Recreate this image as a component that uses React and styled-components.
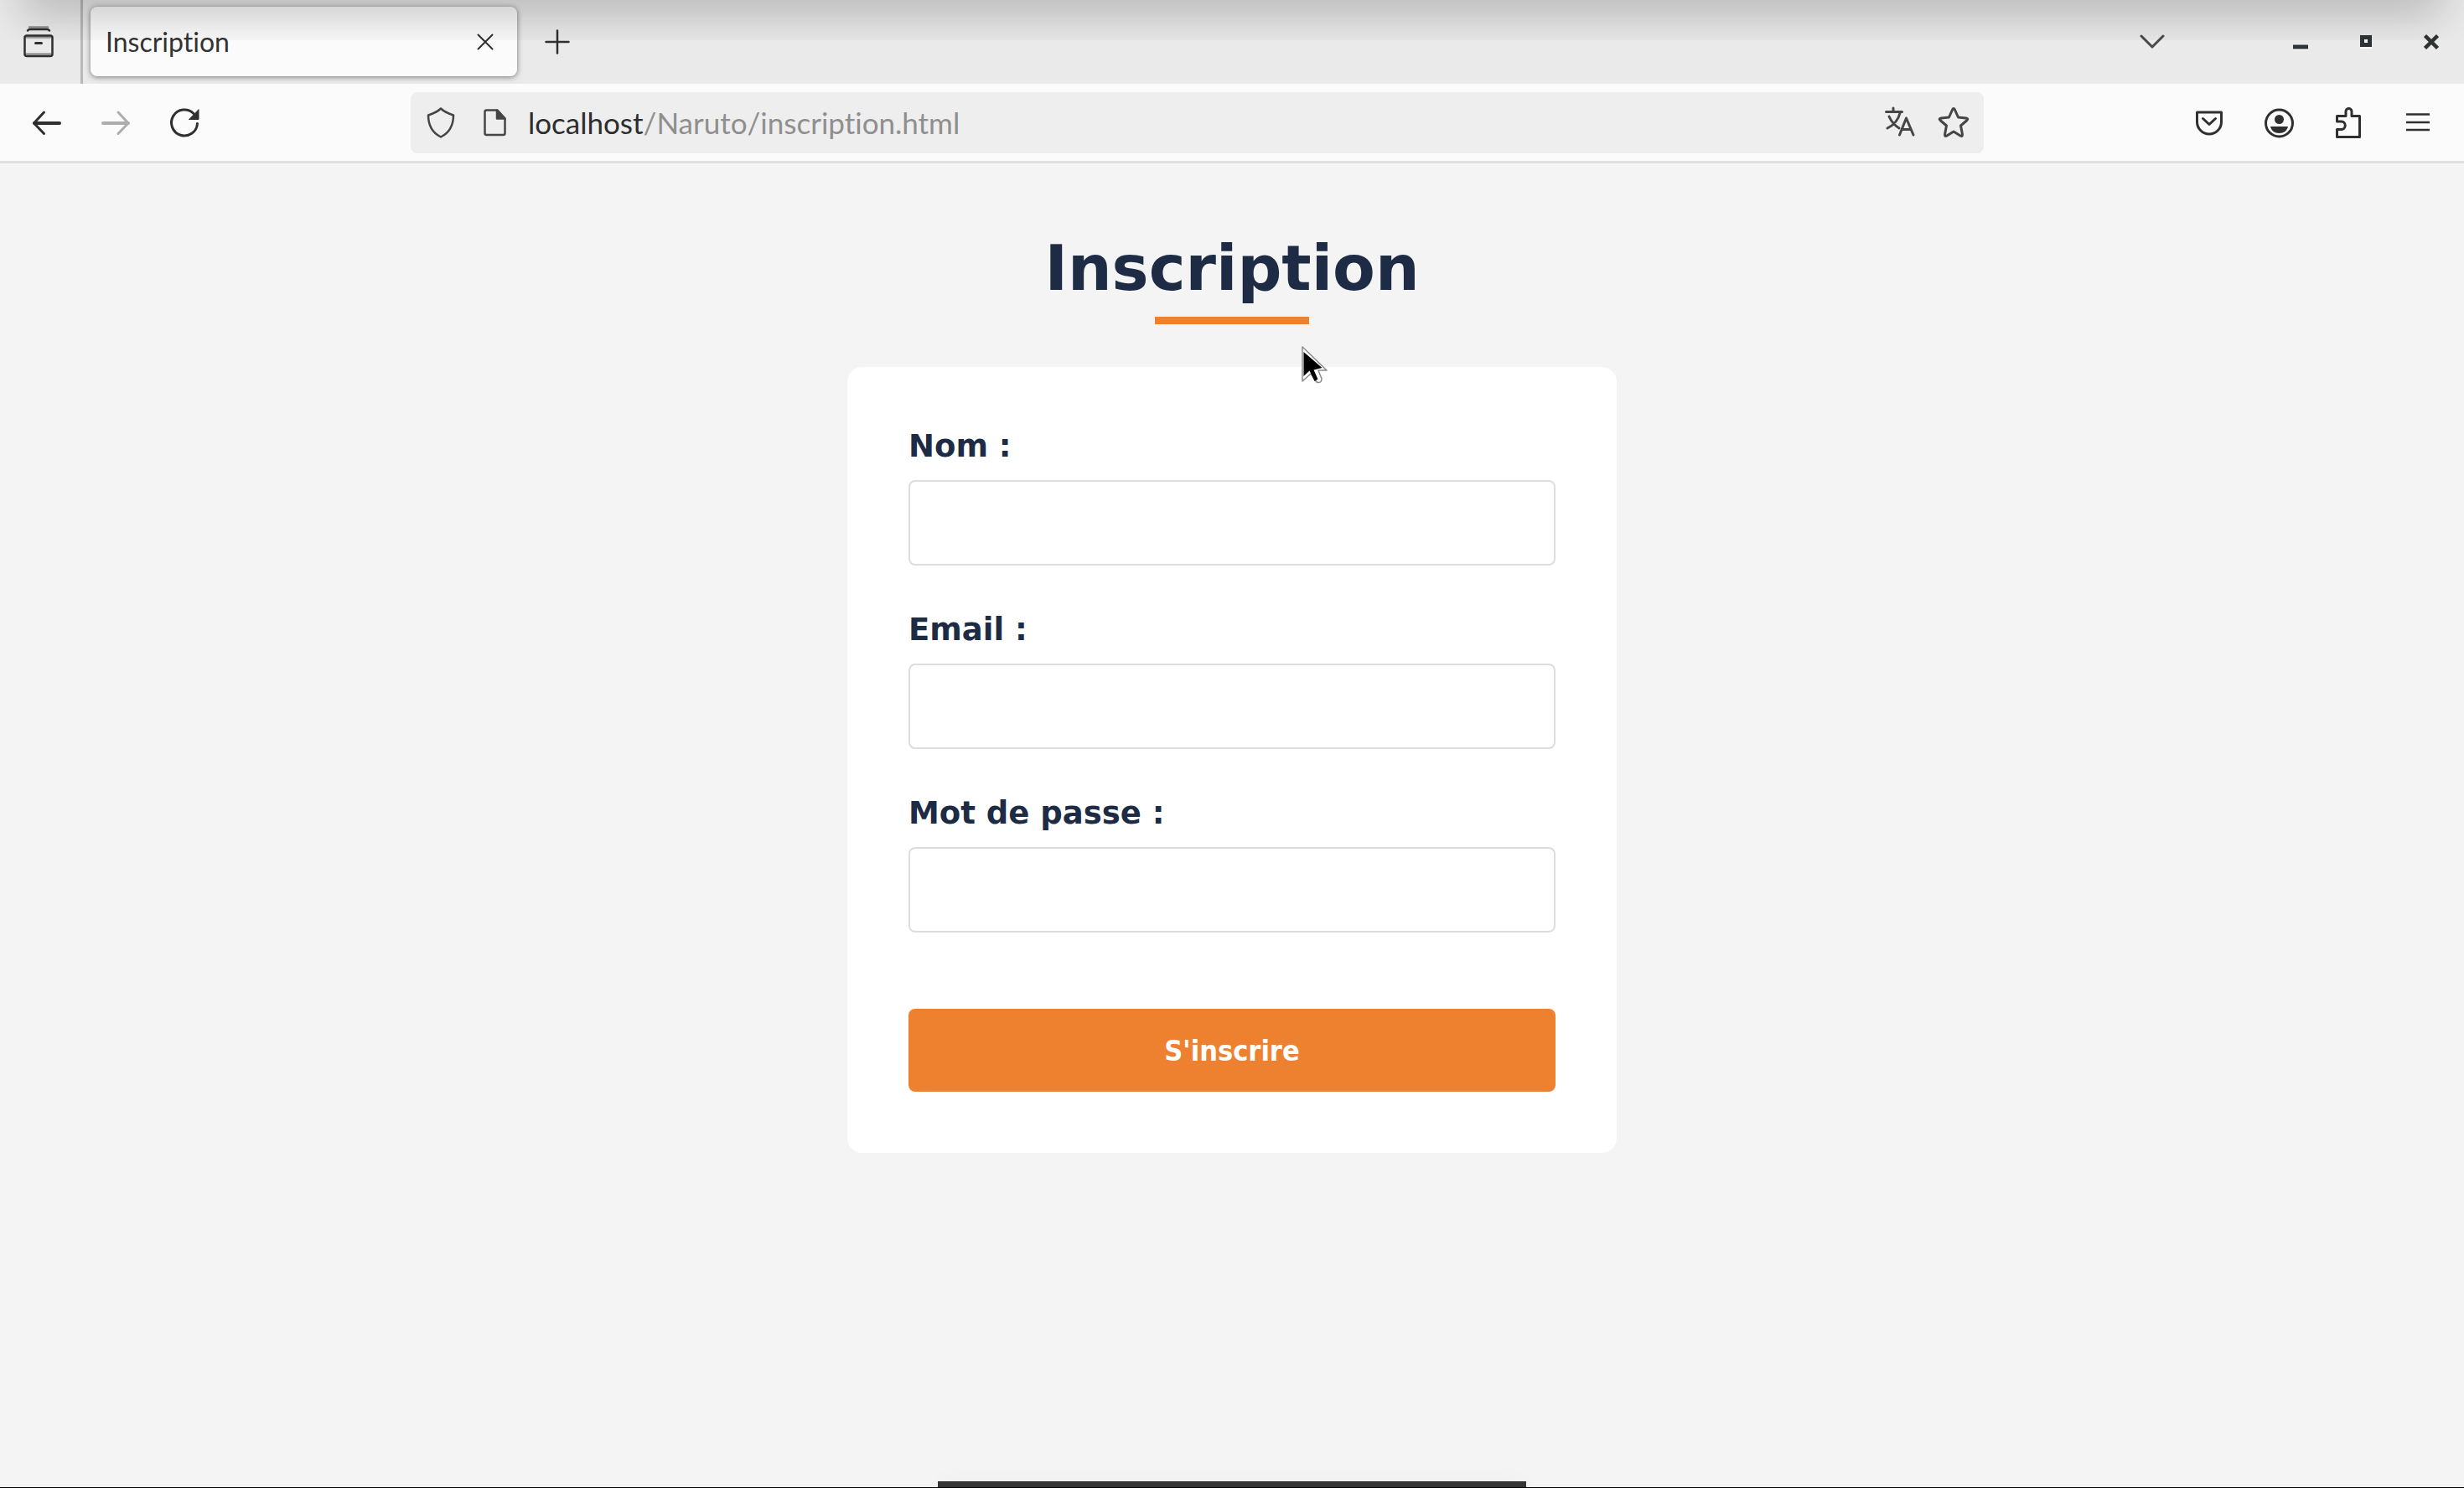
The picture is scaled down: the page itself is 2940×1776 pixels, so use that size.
import React from "react";
import styled, { createGlobalStyle } from "styled-components";

const INK = "#2f2f2f";
const NAVY = "#1d2b45";
const ORANGE = "#ee8130";

const GlobalStyle = createGlobalStyle`
  *, *::before, *::after { box-sizing: border-box; }
  body {
    margin: 0;
    background: #f4f4f4;
    font-family: "DejaVu Sans", sans-serif;
  }
`;

const Window = styled.div`
  position: relative;
  display: flex;
  flex-direction: column;
  min-height: 100vh;
  border-bottom: 1px solid #000;
`;

const TabStrip = styled.header`
  display: flex;
  align-items: stretch;
  height: 100px;
  background: #eaeaea;
`;

const TopShade = styled.div`
  position: absolute;
  top: 0;
  left: 0;
  right: 0;
  height: 48px;
  overflow: hidden;
  pointer-events: none;

  &::before {
    content: "";
    position: absolute;
    top: -60px;
    left: 25px;
    right: 25px;
    height: 60px;
    box-shadow: 0 16px 56px rgba(0, 0, 0, 0.24);
  }
`;

const IconButton = styled.button`
  display: flex;
  align-items: center;
  justify-content: center;
  flex: none;
  width: ${(p) => p.$width || 60}px;
  height: 60px;
  padding: 0;
  border: 0;
  background: none;
  color: ${(p) => p.$color || INK};
`;

const SidebarSlot = styled.div`
  display: flex;
  align-items: center;
  justify-content: center;
  width: 99px;
  padding-right: 4px;
  border-right: 3px solid #b8b8b8;
`;

const Tab = styled.div`
  display: flex;
  align-items: center;
  justify-content: space-between;
  width: 509px;
  margin: 8px 18px 9px 9px;
  padding: 0 18px 0 18px;
  border-radius: 8px;
  background: #fbfbfb;
  box-shadow: 0 1px 6px rgba(0, 0, 0, 0.5);
`;

const TabTitle = styled.span`
  font-family: Lato, sans-serif;
  font-size: 32px;
  line-height: 40px;
  font-variant-ligatures: none;
  color: #333;
`;

const StripActions = styled.div`
  display: flex;
  align-items: center;
`;

const WindowControls = styled(StripActions)`
  gap: 108px;
  margin-left: auto;
`;

const ControlGroup = styled.div`
  display: flex;
`;

const Toolbar = styled.nav`
  display: flex;
  align-items: center;
  gap: 239px;
  height: 95px;
  padding: 0 25px;
  border-bottom: 3px solid #dfdfdf;
  background: #fbfbfb;
`;

const ToolGroup = styled.div`
  display: flex;
  gap: 23px;
`;

const AddressBar = styled.div`
  display: flex;
  align-items: center;
  flex: 1;
  height: 73px;
  padding: 0 4px;
  border-radius: 8px;
  background: #eeeeee;
`;

const Address = styled.a`
  flex: 1;
  padding-left: 8px;
  font-family: Lato, sans-serif;
  font-size: 35px;
  line-height: 40px;
  font-variant-ligatures: none;
  color: #8f8f8f;
  text-decoration: none;
`;

const Host = styled.span`
  color: #2d2d2d;
`;

const Page = styled.main`
  display: flex;
  flex-direction: column;
  align-items: center;
  flex: 1;
  padding-top: 82px;
`;

const Title = styled.h1`
  display: flex;
  flex-direction: column;
  align-items: center;
  gap: 15px;
  margin: 0 0 51px;
  font-size: 74px;
  line-height: 86px;
  color: ${NAVY};

  &::after {
    content: "";
    width: 184px;
    height: 9px;
    background: ${ORANGE};
  }
`;

const Form = styled.form`
  display: flex;
  flex-direction: column;
  gap: 55px;
  width: 918px;
  max-width: 100%;
  padding: 73px;
  border-radius: 18px;
  background: #fff;
`;

const Field = styled.div`
  display: flex;
  flex-direction: column;
  gap: 18px;
`;

const Label = styled.label`
  font-size: 37px;
  font-weight: bold;
  line-height: 44px;
  color: ${NAVY};
`;

const Input = styled.input`
  width: 100%;
  height: 102px;
  padding: 0 24px;
  border: 2px solid #dddddd;
  border-radius: 8px;
  background: #fff;
  font-family: "DejaVu Sans Condensed", "DejaVu Sans", sans-serif;
  font-size: 34px;
`;

const Submit = styled.button`
  height: 99px;
  margin-top: 36px;
  border: 0;
  border-radius: 8px;
  background: ${ORANGE};
  font-family: "DejaVu Sans Condensed", "DejaVu Sans", sans-serif;
  font-size: 34px;
  font-weight: bold;
  line-height: 40px;
  color: #fff;
`;

const Dock = styled.div`
  position: absolute;
  bottom: 0;
  left: 50%;
  width: 702px;
  height: 7px;
  transform: translateX(-50%);
  background: #343434;
  box-shadow: 0 0 24px rgba(0, 0, 0, 0.06);
`;

const Pointer = styled.svg`
  position: absolute;
  top: 413px;
  left: calc(50% + 83px);
`;

const Icon = ({ w = 40, h = 40, sw = 3, cap = "round", children }) => (
  <svg
    width={w}
    height={h}
    viewBox={`0 0 ${w} ${h}`}
    fill="none"
    stroke="currentColor"
    strokeWidth={sw}
    strokeLinecap={cap}
    strokeLinejoin="round"
    aria-hidden="true"
  >
    {children}
  </svg>
);

const fields = [
  { id: "nom", label: "Nom :", type: "text" },
  { id: "email", label: "Email :", type: "email" },
  { id: "passe", label: "Mot de passe :", type: "password" },
];

export default function App() {
  return (
    <>
      <GlobalStyle />
      <Window>
        <TabStrip>
          <SidebarSlot>
            <IconButton aria-label="Vue de Firefox">
              <Icon sw={2.5}>
                <path d="M9 2.500h22" opacity="0.5" />
                <path d="M7 6.500q1-1.500 3-1.500h20q2 0 3 1.500" />
                <path d="M6 14.500h28M6 34.500h28" opacity="0.45" />
                <rect x="3.5" y="12.500" width="33" height="24.500" rx="2.500" />
                <path d="M16.500 21.500h7" strokeWidth="3" />
              </Icon>
            </IconButton>
          </SidebarSlot>
          <Tab>
            <TabTitle>Inscription</TabTitle>
            <IconButton $width={40} aria-label="Fermer l'onglet">
              <Icon w={20} h={20} sw={2}>
                <path d="M1.500 1.500l17 17M18.500 1.500l-17 17" />
              </Icon>
            </IconButton>
          </Tab>
          <StripActions>
            <IconButton aria-label="Nouvel onglet">
              <Icon w={30} h={30} sw={2.5}>
                <path d="M15 1.500v27M1.500 15h27" />
              </Icon>
            </IconButton>
          </StripActions>
          <WindowControls>
            <IconButton $color="#4a4a4a" aria-label="Lister tous les onglets">
              <Icon w={30} h={18}>
                <path d="M2 2l13 13L28 2" />
              </Icon>
            </IconButton>
            <ControlGroup>
              <IconButton $width={78} $color="#2e3436" aria-label="Réduire">
                <Icon w={18} h={20} cap="butt">
                  <path d="M0 20h18" stroke="#fff" strokeWidth="4" />
                  <path d="M0 16h18" strokeWidth="5" />
                </Icon>
              </IconButton>
              <IconButton $width={78} $color="#2e3436" aria-label="Agrandir">
                <Icon w={14} h={16} cap="butt">
                  <path d="M0 15h14" stroke="#fff" strokeWidth="2" />
                  <rect x="2.500" y="2.500" width="9" height="9" fill="#fff" strokeWidth="5" strokeLinejoin="miter" />
                </Icon>
              </IconButton>
              <IconButton $width={78} $color="#2e3436" aria-label="Fermer">
                <Icon w={18} h={20} sw={4.5} cap="butt">
                  <path d="M1.500 2.500l15 15M16.500 2.500l-15 15" />
                </Icon>
              </IconButton>
            </ControlGroup>
          </WindowControls>
        </TabStrip>

        <Toolbar>
          <ToolGroup>
            <IconButton aria-label="Précédent">
              <Icon>
                <path d="M36 21H6" strokeWidth="4" />
                <path d="M17.500 8L5.500 21l12 12.500" />
              </Icon>
            </IconButton>
            <IconButton aria-label="Suivant" $color="#adadad">
              <Icon>
                <path d="M5 21h30" strokeWidth="4" />
                <path d="M23 8l12 13-12 12.500" />
              </Icon>
            </IconButton>
            <IconButton aria-label="Actualiser">
              <Icon>
                <path d="M30 9.500A15.500 15.500 0 1 0 34.500 21.500" />
                <path d="M36 5v11.500H25z" fill="currentColor" strokeWidth="1" />
              </Icon>
            </IconButton>
          </ToolGroup>
          <AddressBar>
            <IconButton $width={64} $color="#454545" aria-label="Protection">
              <Icon sw={2.5}>
                <path d="M20 3.500c4 4 9 6 15 8 0 13-5 21-15 26-10-5-15-13-15-26 6-2 11-4 15-8z" />
              </Icon>
            </IconButton>
            <IconButton $width={64} $color="#454545" aria-label="Informations du site">
              <Icon sw={2.5}>
                <path d="M10.500 5.500h13l9 10v17.500q0 2-2 2h-20q-2 0-2-2v-25.500q0-2 2-2z" />
                <path d="M23 5.500l9.500 10H23z" fill="currentColor" />
              </Icon>
            </IconButton>
            <Address href="http://localhost/Naruto/inscription.html">
              <Host>localhost</Host>/Naruto/inscription.html
            </Address>
            <IconButton $width={64} $color="#454545" aria-label="Traduire la page">
              <Icon>
                <path d="M3.500 7.500h19M12 3v4M20 9q-3 12-15 18M7 13q4 9 12 14M19.500 35l8-20 8.500 20M23 28.500h10" />
              </Icon>
            </IconButton>
            <IconButton $width={64} $color="#454545" aria-label="Marquer la page">
              <Icon>
                <path d="M18.500 5q1.500-3 3 0l4 9 9.500 1q3 .5 1 2.500l-7.500 6.500 2 10.500q0 3-2.500 1.500l-8-5-8 5q-2.500 1.500-2.500-1.500l2-10.500-7.500-6.500q-2-2 1-2.500l9.500-1z" />
              </Icon>
            </IconButton>
          </AddressBar>
          <ToolGroup>
            <IconButton aria-label="Pocket">
              <Icon>
                <path d="M5.500 8h29v11.500a14.500 14.500 0 0 1-29 0z" />
                <path d="M12.500 15.500l7.500 7 7.500-7" />
              </Icon>
            </IconButton>
            <IconButton aria-label="Compte">
              <Icon>
                <circle cx="20.500" cy="21" r="16" />
                <circle cx="20.500" cy="16.500" r="5.500" fill="currentColor" stroke="none" />
                <path d="M10 25h21c-1 5-5 8-10.500 8S11 30 10 25z" fill="currentColor" stroke="none" />
              </Icon>
            </IconButton>
            <IconButton aria-label="Extensions">
              <Icon>
                <path d="M6.500 19v-6.500H17V7a3.500 3.500 0 0 1 7 0v5.500h9.500v25h-27V28.500h5a4.500 4.500 0 0 0 0-9.500z" />
              </Icon>
            </IconButton>
            <IconButton aria-label="Menu">
              <Icon sw={2.5} cap="butt">
                <path d="M6 10.500h28M6 20h28M6 29h28" />
              </Icon>
            </IconButton>
          </ToolGroup>
        </Toolbar>

        <Page>
          <Title>Inscription</Title>
          <Form onSubmit={(e) => e.preventDefault()}>
            {fields.map((f) => (
              <Field key={f.id}>
                <Label htmlFor={f.id}>{f.label}</Label>
                <Input id={f.id} name={f.id} type={f.type} />
              </Field>
            ))}
            <Submit type="submit">S'inscrire</Submit>
          </Form>
        </Page>

        <TopShade />
        <Pointer width="34" height="48" viewBox="0 0 34 48" aria-hidden="true">
          <path
            d="M1 1l29 28H20l4 10q0 6-6 4l-7-10-10 9z"
            fill="#fff"
            stroke="#8a8a8a"
            strokeWidth="1.500"
            strokeLinejoin="round"
          />
          <path d="M2.500 7l22 19-10 2.500 5 11-4 2.500-6-12.500-7 6.500z" fill="#000" />
        </Pointer>
        <Dock />
      </Window>
    </>
  );
}
